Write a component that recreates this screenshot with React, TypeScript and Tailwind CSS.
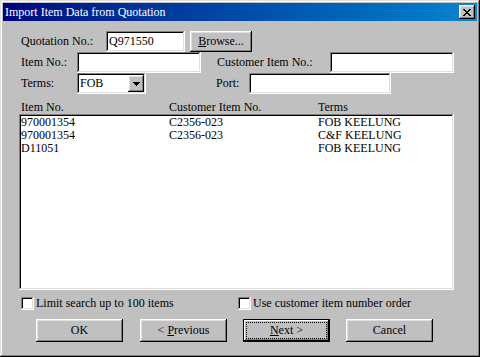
import React from "react";

const raised =
  "bg-[#c0c0c0] shadow-[inset_-1px_-1px_#000,inset_1px_1px_#fff,inset_-2px_-2px_#808080,inset_2px_2px_#dfdfdf]";
const sunken =
  "bg-white shadow-[inset_-1px_-1px_#fff,inset_1px_1px_#808080,inset_-2px_-2px_#dfdfdf,inset_2px_2px_#000]";

const rows = [
  { item: "970001354", cust: "C2356-023", terms: "FOB KEELUNG" },
  { item: "970001354", cust: "C2356-023", terms: "C&F KEELUNG" },
  { item: "D11051", cust: "", terms: "FOB KEELUNG" },
];

const Button: React.FC<{ width: string; focused?: boolean; children: React.ReactNode }> = ({
  width,
  focused,
  children,
}) => {
  if (focused) {
    return (
      <div
        className={`${width} h-[23px] p-[3px] bg-[#c0c0c0] shadow-[inset_0_0_0_1px_#000,inset_-2px_-2px_#000,inset_2px_2px_#fff,inset_-3px_-3px_#808080]`}>
        <div className="w-full h-full border border-dotted border-black flex items-center justify-center">
          {children}
        </div>
      </div>
    );
  }
  return (
    <div className={`${width} h-[23px] ${raised} flex items-center justify-center`}>
      {children}
    </div>
  );
};

const Checkbox: React.FC = () => <div className={`w-[13px] h-[13px] ${sunken}`} />;

export default function App() {
  return (
    <div
      className="w-[480px] h-[357px] bg-[#c0c0c0] p-[3px] text-black text-[12px] leading-[13px] shadow-[inset_-1px_-1px_#000,inset_1px_1px_#dfdfdf,inset_-2px_-2px_#808080,inset_2px_2px_#fff]"
      style={{ fontFamily: '"Liberation Serif", "Times New Roman", serif' }}>
      {/* Title bar */}
      <div className="h-[18px] flex items-center justify-between pl-[2px] pr-[2px] bg-gradient-to-r from-[#000080] to-[#1084d0]">
        <span className="text-white text-[12px]">Import Item Data from Quotation</span>
        <div className={`w-[16px] h-[14px] ${raised} flex items-center justify-center`}>
          <svg width="8" height="7" viewBox="0 0 8 7" shapeRendering="crispEdges">
            <path
              d="M0 0h2v1h-2zM6 0h2v1h-2zM1 1h2v1h-2zM5 1h2v1h-2zM2 2h4v1h-4zM3 3h2v1h-2zM2 4h4v1h-4zM1 5h2v1h-2zM5 5h2v1h-2zM0 6h2v1h-2zM6 6h2v1h-2z"
              fill="#000"
            />
          </svg>
        </div>
      </div>

      {/* Quotation row */}
      <div className="mt-[10px] h-[21px] flex items-center pl-[18px]">
        <span className="w-[85px]">Quotation No.:</span>
        <div className={`w-[79px] h-[21px] ${sunken} flex items-center pl-[3px]`}>Q971550</div>
        <div className={`ml-[5px] w-[62px] h-[21px] ${raised} flex items-center justify-center`}>
          <span>
            <span className="underline">B</span>rowse...
          </span>
        </div>
      </div>

      {/* Item / Customer item row */}
      <div className="h-[21px] flex items-center pl-[18px]">
        <span className="w-[56px]">Item No.:</span>
        <div className={`w-[124px] h-[21px] ${sunken}`} />
        <span className="ml-[16px] w-[113px]">Customer Item No.:</span>
        <div className={`w-[124px] h-[21px] ${sunken}`} />
      </div>

      {/* Terms / Port row */}
      <div className="h-[21px] flex items-center pl-[18px]">
        <span className="w-[56px]">Terms:</span>
        <div className={`w-[69px] h-[21px] ${sunken} flex items-center pl-[3px] pr-[2px]`}>
          <span className="flex-1">FOB</span>
          <div className={`w-[16px] h-[17px] ${raised} flex items-center justify-center`}>
            <svg width="7" height="4" viewBox="0 0 7 4" shapeRendering="crispEdges">
              <path d="M0 0h7v1h-7zM1 1h5v1h-5zM2 2h3v1h-3zM3 3h1v1h-1z" fill="#000" />
            </svg>
          </div>
        </div>
        <span className="ml-[70px] w-[33px]">Port:</span>
        <div className={`w-[142px] h-[21px] ${sunken}`} />
      </div>

      {/* List headers */}
      <div className="mt-[5px] h-[15px] flex items-end pl-[18px]">
        <span className="w-[148px]">Item No.</span>
        <span className="w-[149px]">Customer Item No.</span>
        <span>Terms</span>
      </div>

      {/* List */}
      <div className={`ml-[16px] w-[435px] h-[176px] ${sunken} pt-[2px] pl-[2px]`}>
        {rows.map((r, i) => (
          <div key={i} className="flex h-[13px]">
            <span className="w-[148px]">{r.item}</span>
            <span className="w-[149px]">{r.cust}</span>
            <span>{r.terms}</span>
          </div>
        ))}
      </div>

      {/* Checkboxes */}
      <div className="mt-[6px] h-[14px] flex items-center pl-[18px]">
        <Checkbox />
        <span className="ml-[2px] w-[202px]">Limit search up to 100 items</span>
        <Checkbox />
        <span className="ml-[2px]">Use customer item number order</span>
      </div>

      {/* Buttons */}
      <div className="mt-[9px] flex pl-[33px]">
        <Button width="w-[87px]">OK</Button>
        <div className="ml-[17px]">
          <Button width="w-[87px]">
            <span>
              &lt; <span className="underline">P</span>revious
            </span>
          </Button>
        </div>
        <div className="ml-[16px]">
          <Button width="w-[87px]" focused>
            <span>
              <span className="underline">N</span>ext &gt;
            </span>
          </Button>
        </div>
        <div className="ml-[16px]">
          <Button width="w-[87px]">Cancel</Button>
        </div>
      </div>
    </div>
  );
}
